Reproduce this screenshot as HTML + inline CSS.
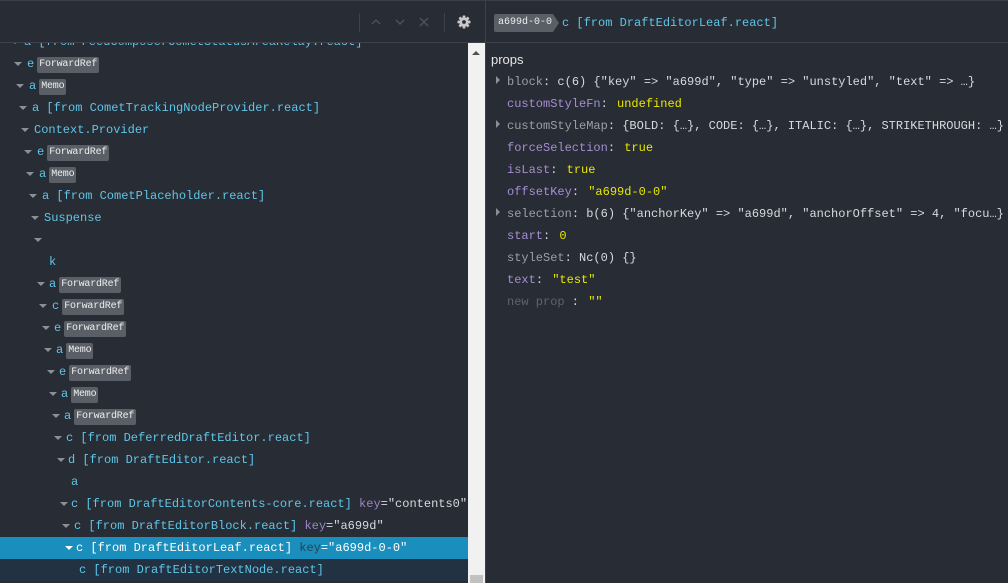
<!DOCTYPE html>
<html><head><meta charset="utf-8"><style>
*{margin:0;padding:0;box-sizing:border-box}
body{width:1008px;height:583px;background:#282c34;overflow:hidden;position:relative;font-family:"Liberation Mono",monospace;font-size:12px;color:#d7dae0}
.tb{position:absolute;left:0;top:0;width:1008px;height:43px;border-bottom:1px solid #3d424a;border-top:1px solid #3a3f47}
.vd{position:absolute;left:485px;top:0;width:1px;height:583px;background:#3d424a}
.tree{position:absolute;left:0;top:43px;width:468px;height:540px;overflow:hidden}
.row{position:absolute;left:0;width:468px;height:22px;line-height:22px;white-space:nowrap;color:#5fc6e8}
.row .ar{position:absolute;top:9px;width:0;height:0;border-left:4px solid transparent;border-right:4px solid transparent;border-top:4px solid #8b8f96}
.row .t{position:absolute;top:0}
.bd{display:inline-block;background:#5a5e66;color:#eeeeee;font-size:10px;line-height:16px;height:16px;padding:0 2px;border-radius:2px;vertical-align:1px;margin-left:3px;letter-spacing:-0.2px}
.k{color:#9b83c9}.v{color:#d7dae0}
.sel{background:#1a8fbd}.sel .t{color:#fff}.sel .k{color:#2b3f50}.sel .v{color:#fff}.sel .ar{border-top-color:#fff}
.sub{background:#223242}
.sb{position:absolute;left:468px;top:43px;width:17px;height:540px;background:#f1f1f1}
.p{position:absolute;left:507px;height:22px;line-height:22px;white-space:nowrap}
.pk{color:#a58ed4}.pg{color:#9aa0a8}.y{color:#e8e800;margin-left:2px}.w{color:#d7dae0}
.pa{position:absolute;left:496px;width:0;height:0;border-top:4px solid transparent;border-bottom:4px solid transparent;border-left:4px solid #8b8f96}
</style></head><body>
<div class="tb">
 <div style="position:absolute;left:359px;top:12px;width:1px;height:19px;background:#3d424a"></div>
 <svg style="position:absolute;left:370px;top:16px" width="12" height="10"><path d="M2 7 L6 3 L10 7" stroke="#4c5159" stroke-width="1.5" fill="none"/></svg>
 <svg style="position:absolute;left:394px;top:16px" width="12" height="10"><path d="M2 3 L6 7 L10 3" stroke="#4c5159" stroke-width="1.5" fill="none"/></svg>
 <svg style="position:absolute;left:418px;top:15px" width="12" height="12"><path d="M2 2 L10 10 M10 2 L2 10" stroke="#4c5159" stroke-width="1.5"/></svg>
 <div style="position:absolute;left:444px;top:12px;width:1px;height:19px;background:#3d424a"></div>
 <svg style="position:absolute;left:457px;top:14px" width="14" height="14" viewBox="0 0 14 14"><g fill="#c8c8c8"><circle cx="7" cy="7" r="4.6"/><rect x="5.6" y="0.5" width="2.8" height="13" rx="0.6"/><rect x="5.6" y="0.5" width="2.8" height="13" rx="0.6" transform="rotate(45 7 7)"/><rect x="5.6" y="0.5" width="2.8" height="13" rx="0.6" transform="rotate(90 7 7)"/><rect x="5.6" y="0.5" width="2.8" height="13" rx="0.6" transform="rotate(135 7 7)"/></g><circle cx="7" cy="7" r="1.9" fill="#282c34"/></svg>
 <div style="position:absolute;left:494px;top:13px;height:18px;width:59px;background:#5a5e66;color:#eeeeee;font-size:10px;line-height:18px;padding-left:4px;border-radius:2px 0 0 2px">a699d-0-0</div>
 <div style="position:absolute;left:553px;top:13px;width:0;height:0;border-top:9px solid transparent;border-bottom:9px solid transparent;border-left:6px solid #5a5e66"></div>
 <div style="position:absolute;left:562px;top:11px;line-height:22px;color:#5fc6e8">c [from DraftEditorLeaf.react]</div>
</div>
<div class="vd"></div>
<div class="tree">
<div class="row" style="top:-12px"><span class="ar" style="left:11px"></span><span class="t" style="left:24px">a [from FeedComposerCometStatusAreaRelay.react]</span></div>
<div class="row" style="top:10px"><span class="ar" style="left:14px"></span><span class="t" style="left:27px">e<span class="bd">ForwardRef</span></span></div>
<div class="row" style="top:32px"><span class="ar" style="left:16px"></span><span class="t" style="left:29px">a<span class="bd">Memo</span></span></div>
<div class="row" style="top:54px"><span class="ar" style="left:19px"></span><span class="t" style="left:32px">a [from CometTrackingNodeProvider.react]</span></div>
<div class="row" style="top:76px"><span class="ar" style="left:21px"></span><span class="t" style="left:34px">Context.Provider</span></div>
<div class="row" style="top:98px"><span class="ar" style="left:24px"></span><span class="t" style="left:37px">e<span class="bd">ForwardRef</span></span></div>
<div class="row" style="top:120px"><span class="ar" style="left:26px"></span><span class="t" style="left:39px">a<span class="bd">Memo</span></span></div>
<div class="row" style="top:142px"><span class="ar" style="left:29px"></span><span class="t" style="left:42px">a [from CometPlaceholder.react]</span></div>
<div class="row" style="top:164px"><span class="ar" style="left:31px"></span><span class="t" style="left:44px">Suspense</span></div>
<div class="row" style="top:186px"><span class="ar" style="left:34px"></span></div>
<div class="row" style="top:208px"><span class="t" style="left:49px">k</span></div>
<div class="row" style="top:230px"><span class="ar" style="left:37px"></span><span class="t" style="left:49px">a<span class="bd">ForwardRef</span></span></div>
<div class="row" style="top:252px"><span class="ar" style="left:39px"></span><span class="t" style="left:52px">c<span class="bd">ForwardRef</span></span></div>
<div class="row" style="top:274px"><span class="ar" style="left:42px"></span><span class="t" style="left:54px">e<span class="bd">ForwardRef</span></span></div>
<div class="row" style="top:296px"><span class="ar" style="left:44px"></span><span class="t" style="left:56px">a<span class="bd">Memo</span></span></div>
<div class="row" style="top:318px"><span class="ar" style="left:47px"></span><span class="t" style="left:59px">e<span class="bd">ForwardRef</span></span></div>
<div class="row" style="top:340px"><span class="ar" style="left:49px"></span><span class="t" style="left:61px">a<span class="bd">Memo</span></span></div>
<div class="row" style="top:362px"><span class="ar" style="left:52px"></span><span class="t" style="left:64px">a<span class="bd">ForwardRef</span></span></div>
<div class="row" style="top:384px"><span class="ar" style="left:54px"></span><span class="t" style="left:66px">c [from DeferredDraftEditor.react]</span></div>
<div class="row" style="top:406px"><span class="ar" style="left:57px"></span><span class="t" style="left:68px">d [from DraftEditor.react]</span></div>
<div class="row" style="top:428px"><span class="t" style="left:71px">a</span></div>
<div class="row" style="top:450px"><span class="ar" style="left:60px"></span><span class="t" style="left:71px">c [from DraftEditorContents-core.react] <span class="k">key</span><span class="v">="contents0"</span></span></div>
<div class="row" style="top:472px"><span class="ar" style="left:62px"></span><span class="t" style="left:74px">c [from DraftEditorBlock.react] <span class="k">key</span><span class="v">="a699d"</span></span></div>
<div class="row sel" style="top:494px"><span class="ar" style="left:65px"></span><span class="t" style="left:76px">c [from DraftEditorLeaf.react] <span class="k">key</span><span class="v">="a699d-0-0"</span></span></div>
<div class="row sub" style="top:516px"><span class="t" style="left:79px">c [from DraftEditorTextNode.react]</span></div>
</div>
<div class="sb">
 <div style="position:absolute;left:4px;top:8px;width:0;height:0;border-left:4px solid transparent;border-right:4px solid transparent;border-bottom:4px solid #505050"></div>
 <div style="position:absolute;left:2px;top:532px;width:13px;height:8px;background:#c1c1c1"></div>
</div>
<div style="position:absolute;left:491px;top:49px;font-family:'Liberation Sans',sans-serif;font-size:13px;color:#e6e6e6;line-height:22px">props</div>
<div class="pa" style="top:76px"></div>
<div class="p" style="top:71px"><span class="pg">block</span><span class="w">: c(6) {"key" =&gt; "a699d", "type" =&gt; "unstyled", "text" =&gt; …}</span></div>
<div class="p" style="top:93px"><span class="pk">customStyleFn</span><span class="w">: </span> <span class="y">undefined</span></div>
<div class="pa" style="top:120px"></div>
<div class="p" style="top:115px"><span class="pg">customStyleMap</span><span class="w">: {BOLD: {…}, CODE: {…}, ITALIC: {…}, STRIKETHROUGH: …}</span></div>
<div class="p" style="top:137px"><span class="pk">forceSelection</span><span class="w">: </span> <span class="y">true</span></div>
<div class="p" style="top:159px"><span class="pk">isLast</span><span class="w">: </span> <span class="y">true</span></div>
<div class="p" style="top:181px"><span class="pk">offsetKey</span><span class="w">: </span> <span class="y">"a699d-0-0"</span></div>
<div class="pa" style="top:208px"></div>
<div class="p" style="top:203px"><span class="pg">selection</span><span class="w">: b(6) {"anchorKey" =&gt; "a699d", "anchorOffset" =&gt; 4, "focu…}</span></div>
<div class="p" style="top:225px"><span class="pk">start</span><span class="w">: </span> <span class="y">0</span></div>
<div class="p" style="top:247px"><span class="pg">styleSet</span><span class="w">: Nc(0) {}</span></div>
<div class="p" style="top:269px"><span class="pk">text</span><span class="w">: </span> <span class="y">"test"</span></div>
<div class="p" style="top:291px"><span style="color:#5f646c">new prop</span><span class="w">   : </span> <span class="y">""</span></div>
</body></html>
